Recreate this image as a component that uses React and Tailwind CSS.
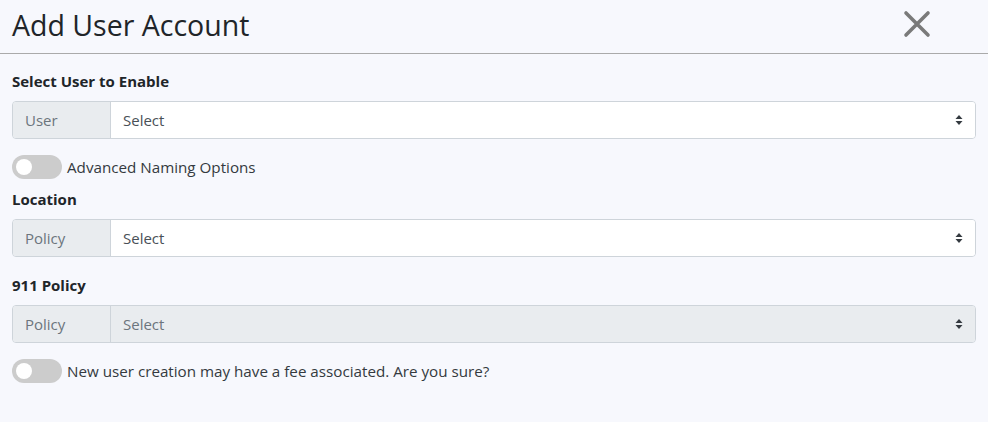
function Caret() {
  return (
    <svg width="8" height="12" viewBox="0 0 8 12" className="shrink-0">
      <path d="M4 1 L7.5 5 H0.5 Z" fill="#343a40" />
      <path d="M4 11 L7.5 7 H0.5 Z" fill="#343a40" />
    </svg>
  );
}

function CloseIcon() {
  return (
    <svg width="28" height="28" viewBox="0 0 28 28">
      <path d="M3 3 L25 25 M25 3 L3 25" stroke="#7a7a7a" strokeWidth="3.6" strokeLinecap="round" fill="none" />
    </svg>
  );
}

function SelectGroup({ addon, disabled }) {
  return (
    <div className="flex h-[38px] w-full rounded-[4px] border border-[#ced4da] overflow-hidden">
      <div className="w-[98px] shrink-0 flex items-center px-3 bg-[#e9ecef] border-r border-[#ced4da] text-[15px] text-[#6c757d]">
        {addon}
      </div>
      <div
        className={`flex-1 flex items-center justify-between pl-3 pr-3 text-[15px] ${
          disabled ? "bg-[#e9ecef] text-[#6c757d]" : "bg-white text-[#495057]"
        }`}
      >
        <span>Select</span>
        <Caret />
      </div>
    </div>
  );
}

function Toggle({ label }) {
  return (
    <div className="flex items-center gap-[5px]">
      <div className="w-[50px] h-[24px] rounded-full bg-[#cccccc] flex items-center px-[4px]">
        <div className="w-[16px] h-[16px] rounded-full bg-white" />
      </div>
      <span className="text-[15.2px] text-[#343a40]">{label}</span>
    </div>
  );
}

export default function App() {
  return (
    <div
      className="w-[988px] h-[422px] bg-[#f7f8fd] text-[#212529]"
      style={{ fontFamily: "'Open Sans', 'Noto Sans', sans-serif" }}
    >
      {/* header */}
      <div className="h-[54px] flex items-center justify-between pl-3 pr-[57px] border-b border-[#aaaaaa]">
        <h1 className="text-[28.5px] font-normal text-[#212529] leading-none pb-[2px]">Add User Account</h1>
        <div className="pb-[6px]">
          <CloseIcon />
        </div>
      </div>

      <div className="px-3">
        <div className="mt-[17px] text-[15px] font-bold leading-[20px]">Select User to Enable</div>
        <div className="mt-[10px]">
          <SelectGroup addon="User" />
        </div>

        <div className="mt-[16px]">
          <Toggle label="Advanced Naming Options" />
        </div>

        <div className="mt-[10px] text-[15px] font-bold leading-[20px]">Location</div>
        <div className="mt-[10px]">
          <SelectGroup addon="Policy" />
        </div>

        <div className="mt-[18px] text-[15px] font-bold leading-[20px]">911 Policy</div>
        <div className="mt-[10px]">
          <SelectGroup addon="Policy" disabled />
        </div>

        <div className="mt-[16px]">
          <Toggle label="New user creation may have a fee associated. Are you sure?" />
        </div>
      </div>
    </div>
  );
}
